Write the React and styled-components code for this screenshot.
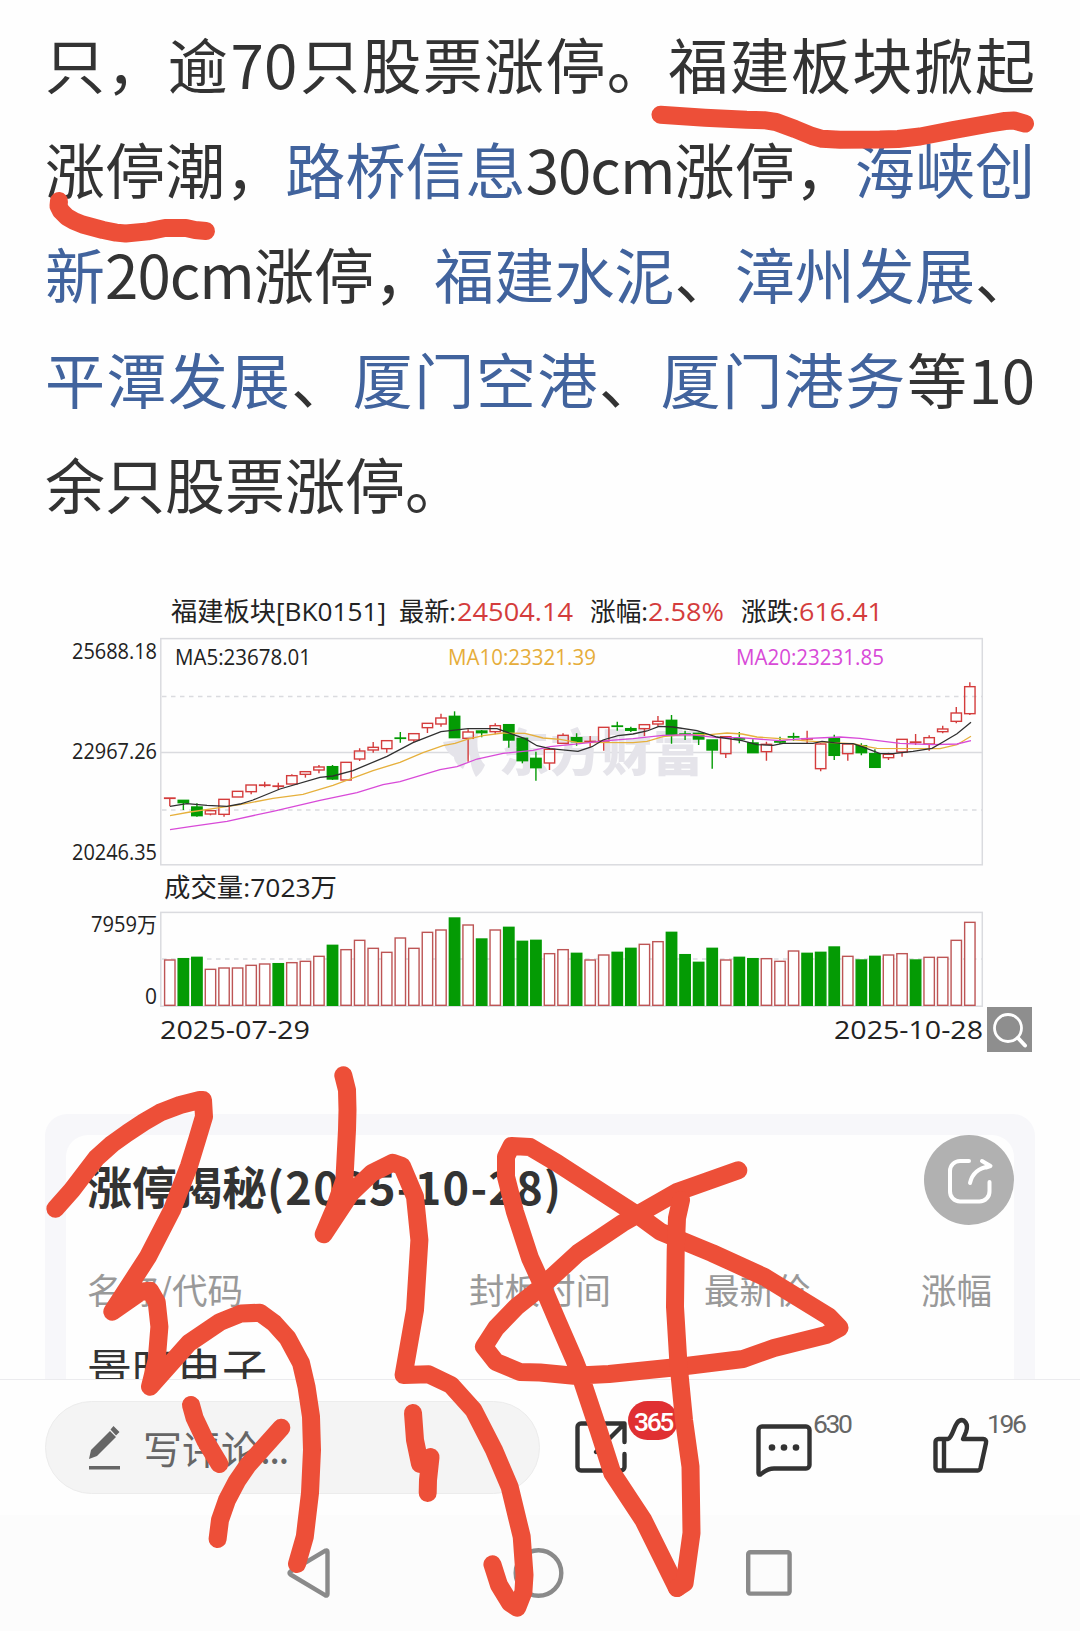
import React from 'react'
import styled, { createGlobalStyle, ThemeProvider } from 'styled-components'

const theme = {
    ink: '#333333',
    link: '#41639d',
    muted: '#999999',
    up: '#d43c3c',
    down: '#049b04',
    marker: '#ed4f38',
    cjk: '"Noto Sans CJK SC", sans-serif',
    chart: '"Open Sans", "Noto Sans CJK SC", sans-serif',
}

const GlobalStyle = createGlobalStyle`
    * {
        box-sizing: border-box;
    }

    body {
        margin: 0;
        background: #fefefe;
    }
`

const Screen = styled.div(
    ({ theme }) => `
    position: relative;
    display: flex;
    flex-direction: column;
    width: 1080px;
    height: 1631px;
    overflow: hidden;
    color: ${theme.ink};
    font-family: ${theme.cjk};
`
)

const Article = styled.main`
    display: flex;
    flex-direction: column;
    height: 1379px;
    padding: 10px 45px 0;
    overflow: hidden;
`

const Paragraph = styled.div`
    flex: none;
    font-size: 60px;
    line-height: 105px;
`

const Line = styled.div(
    ({ last }) => `
    white-space: nowrap;
    text-align: justify;
    text-align-last: ${last ? 'left' : 'justify'};
`
)

const Stock = styled.a(
    ({ theme }) => `
    color: ${theme.link};
`
)

const Amount = styled.span(
    ({ side = 0, tracking = 0 }) => `
    margin: 0 ${side}px;
    letter-spacing: ${tracking}px;
`
)

const Figure = styled.figure`
    display: flex;
    align-items: flex-end;
    flex: none;
    height: 463px;
    margin: 55px 0 0;
`

const Chart = styled.svg(
    ({ theme }) => `
    flex: none;
    width: 942px;
    height: 463px;
    font-family: ${theme.chart};
`
)

const ZoomButton = styled.button`
    display: flex;
    flex: none;
    width: 45px;
    height: 45px;
    margin-bottom: 1px;
    padding: 0;
    border: none;
    background: #8e8e8e;
`

const Panel = styled.section`
    flex: none;
    height: 400px;
    margin-top: 61px;
    padding: 21px;
    border-radius: 22px;
    background: #f7f7fa;
`

const PanelBody = styled.div`
    height: 379px;
    padding: 18px 21px 0;
    border-radius: 22px;
    background: #fefefe;
`

const PanelTitle = styled.h2`
    margin: 0;
    font-size: 45px;
    line-height: 66px;
    font-weight: 700;
    white-space: nowrap;
`

const TableHead = styled.div(
    ({ theme }) => `
    display: grid;
    grid-template-columns: 382px 235px 217px auto;
    margin-top: 44px;
    color: ${theme.muted};
    font-size: 35.5px;
    line-height: 52px;
    white-space: nowrap;
`
)

const StockName = styled.div`
    margin-top: 20px;
    font-size: 45px;
    line-height: 66px;
`

const FloatingShare = styled.button`
    position: absolute;
    top: 1135px;
    left: 924px;
    width: 90px;
    height: 90px;
    padding: 0;
    border: none;
    border-radius: 50%;
    background: #b1b1b1;
`

const ActionBar = styled.div`
    display: flex;
    align-items: flex-start;
    height: 136px;
    padding: 21px 45px 0;
    border-top: 1px solid #ebebee;
    background: #fefefe;
`

const CommentBox = styled.div`
    display: flex;
    align-items: center;
    width: 495px;
    height: 93px;
    padding: 0 0 2px 42px;
    border: 1px solid #ececec;
    border-radius: 47px;
    background: #f4f4f4;
    color: #666666;
    font-size: 39px;
    gap: 22px;
`

const Action = styled.div(
    ({ gap }) => `
    display: flex;
    align-items: flex-start;
    margin-left: ${gap}px;
`
)

const Icon = styled.svg(
    ({ width, height, top = 0, color = '#333333', line = 4.4 }) => `
    flex: none;
    width: ${width}px;
    height: ${height}px;
    margin-top: ${top}px;
    fill: none;
    stroke: ${color};
    stroke-width: ${line};
    stroke-linecap: round;
    stroke-linejoin: round;
    overflow: visible;
`
)

const Count = styled.span(
    ({ offset = 1 }) => `
    width: 40px;
    margin: 9px 0 0 ${offset}px;
    color: #666666;
    font-family: Roboto, sans-serif;
    font-size: 26.5px;
    line-height: 27px;
    letter-spacing: -2.4px;
`
)

const Badge = styled.span`
    width: 50px;
    height: 39px;
    margin-left: 1px;
    padding-left: 6px;
    border-radius: 20px;
    background: #e03032;
    color: #ffffff;
    font-family: Roboto, sans-serif;
    font-size: 26.5px;
    font-weight: 500;
    line-height: 41px;
    letter-spacing: -2.4px;
`

const SystemNav = styled.nav`
    display: flex;
    justify-content: space-between;
    align-items: center;
    height: 116px;
    padding: 0 288px 0 287px;
    background: #fcfcfc;
`

const Markup = styled.svg(
    ({ theme }) => `
    position: absolute;
    top: 0;
    left: 0;
    width: 1080px;
    height: 1631px;
    fill: none;
    stroke: ${theme.marker};
    stroke-width: 18;
    stroke-linecap: round;
    stroke-linejoin: round;
    pointer-events: none;
`
)

// direction, high, body top, body bottom, low (thirds of a pixel), volume top
const days = [
    ['r', 654, 654, 655, 679, 300], ['g', 661, 661, 668, 690, 296], ['g', 670, 681, 707, 710, 292],
    ['r', 692, 692, 702, 706, 328], ['r', 658, 658, 703, 710, 324], ['r', 634, 634, 651, 651, 324],
    ['r', 615, 615, 635, 643, 316], ['r', 605, 615, 616, 622, 312], ['r', 608, 618, 619, 629, 311, 'g'],
    ['r', 583, 587, 612, 612, 308], ['r', 575, 575, 583, 593, 304], ['r', 555, 561, 570, 580, 289],
    ['g', 555, 560, 597, 600, 256], ['r', 547, 547, 600, 600, 269], ['r', 505, 513, 537, 543, 241],
    ['r', 486, 502, 510, 518, 265], ['r', 482, 482, 506, 518, 277], ['g', 456, 474, 475, 488, 234, 'r'],
    ['r', 461, 461, 480, 486, 265], ['r', 430, 430, 443, 459, 217], ['r', 401, 414, 432, 440, 210],
    ['g', 394, 409, 473, 473, 174], ['r', 448, 456, 475, 545, 195], ['g', 450, 453, 458, 472, 237],
    ['r', 430, 437, 455, 463, 210], ['g', 434, 434, 480, 503, 202], ['g', 475, 475, 542, 550, 244],
    ['g', 515, 535, 563, 602, 241], ['r', 508, 508, 549, 570, 281], ['r', 460, 466, 490, 490, 269],
    ['g', 460, 473, 485, 497, 280], ['r', 468, 484, 487, 500, 300], ['r', 442, 442, 483, 512, 285],
    ['g', 425, 438, 442, 452, 277], ['g', 440, 446, 451, 456, 265], ['r', 434, 434, 446, 468, 253],
    ['r', 408, 424, 432, 440, 245], ['g', 405, 421, 465, 491, 217], ['g', 452, 462, 464, 480, 284],
    ['g', 458, 460, 477, 495, 307], ['g', 480, 480, 510, 566, 265], ['r', 470, 470, 521, 534, 300],
    ['g', 456, 476, 477, 490, 292], ['g', 478, 489, 518, 518, 296], ['r', 485, 493, 515, 542, 296],
    ['g', 470, 485, 486, 492, 304, 'r'], ['g', 458, 470, 471, 482, 273, 'r'], ['r', 452, 476, 477, 490, 280, 'g'],
    ['r', 490, 492, 566, 574, 277, 'g'], ['g', 464, 476, 526, 540, 261], ['r', 490, 492, 521, 542, 289],
    ['g', 490, 497, 518, 526, 300], ['g', 508, 521, 562, 562, 289], ['r', 518, 523, 533, 540, 285],
    ['r', 478, 478, 516, 530, 281], ['r', 462, 486, 487, 495, 300, 'g'], ['r', 466, 473, 492, 512, 292],
    ['r', 437, 447, 455, 460, 292], ['r', 381, 399, 424, 430, 241], ['r', 307, 320, 401, 405, 187],
]

const averages = [
    {
        color: '#e6b03c',
        points:
            '170,815.7 190,812 213,808.7 240,804.7 273,798.3 303,794.3 333,785.3 373,770.7 400,762.3 423,752.7 443,745.7 455,743.3 467,739.3 483,735.7 503,733 525,733.3 543,738 560,739.3 577,742.3 633,742.7 647,741.3 663,736.7 683,734.7 710,734.7 727,733 742,734 757,737 780,738.7 803,740.7 827,742.3 853,743.7 867,746.7 877,748.3 940,748.7 957,744.7 971,736.3',
    },
    {
        color: '#d84ad8',
        points:
            '170,829.7 190,826.7 227,821.3 273,811.3 320,800.3 357,792.7 383,784.7 400,781.7 440,769.7 457,766.7 477,759 503,753.3 533,750.3 550,746.7 580,743.7 607,740.7 633,738.7 663,735.3 690,734.7 717,737.7 740,737.7 780,740.7 803,738.7 840,737 860,738.3 900,743.3 933,744.7 957,744 971,740.7',
    },
    {
        color: '#303030',
        points:
            '170,806.3 187,803.7 207,805.3 227,806.3 240,804 253,800 280,789 320,777.3 333,776 353,770.7 387,756.3 413,742.7 441,731.7 468,728.7 497,728.7 510,733.3 525,738.7 537,745.7 550,748.7 578,751.3 592,746.7 603,740 618,735.7 633,734 647,731 659,726.3 673,727 697,730.7 717,737 742,740.7 757,744.7 773,745.3 783,743.3 813,743.3 822,741.3 840,743.3 853,743.7 862,746.7 880,753.7 893,753.7 913,751.3 932,748.3 943,742 957,733.7 971,722.3',
    },
]

const labels = [
    { x: 171, y: 621, w: 215, size: 26, text: '福建板块[BK0151]' },
    { x: 399, y: 621, w: 57, size: 26, text: '最新:' },
    { x: 457, y: 621, w: 116, size: 26, text: '24504.14', color: '#d43c3c' },
    { x: 590, y: 621, w: 58, size: 26, text: '涨幅:' },
    { x: 648, y: 621, w: 76, size: 26, text: '2.58%', color: '#d43c3c' },
    { x: 741, y: 621, w: 58, size: 26, text: '涨跌:' },
    { x: 799, y: 621, w: 84, size: 26, text: '616.41', color: '#d43c3c' },
    { x: 72, y: 658.5, w: 85, size: 21, text: '25688.18' },
    { x: 72, y: 759, w: 85, size: 21, text: '22967.26' },
    { x: 72, y: 859.5, w: 85, size: 21, text: '20246.35' },
    { x: 175, y: 665, w: 136, size: 21, text: 'MA5:23678.01' },
    { x: 448, y: 665, w: 148, size: 21, text: 'MA10:23321.39', color: '#e6ad3a' },
    { x: 736, y: 665, w: 148, size: 21, text: 'MA20:23231.85', color: '#d84ad8' },
    { x: 164, y: 897, w: 173, size: 26, text: '成交量:7023万' },
    { x: 91, y: 931.5, w: 66, size: 21, text: '7959万' },
    { x: 145, y: 1003.5, w: 12, size: 21, text: '0' },
    { x: 160, y: 1038.5, w: 150, size: 26, text: '2025-07-29' },
    { x: 834, y: 1038.5, w: 149, size: 26, text: '2025-10-28' },
]

const strokes = [
    '660.5,114.7 705,117.8 746.6,119.8 764,120.2 776,122 795,129 812,136 822,138.8 840,139.8 880,139.6 898,139 920,136.5 953,130.2 990,123.5 1005,121 1014,120.5 1025,123.6',
    '59,201 58.5,206 61,211 67,217 74,221 82.6,224.5 103,230 116,232.6 125.7,233.5 148,231.4 165,228 186,228 195,230 206,231',
    '55.4,1208.7 72,1190 96.4,1158 112,1144 127.4,1133 144,1122 160,1112.7 180,1105 199.7,1100 203,1100 204,1116.7 197,1140 189,1166 172,1210 148,1256.7 112.3,1311.7 141,1291.7 150,1290.7 156.7,1302 159.4,1326.7 156.7,1360 150,1386.7 189,1343 220,1322 241,1313.5 260,1312.7 274,1323 287.5,1338 301,1363 306.5,1386.7 311,1416.7 312,1450 310,1493 304.8,1536.7 297,1564',
    '191,1405 194.6,1418 205,1440 219.4,1464',
    '281.3,1427.7 248,1465 237,1481 227,1500 220,1520 217.6,1539',
    '343.3,1075.3 347,1090 347.5,1110 347,1130 344.4,1180 334,1210 323.7,1234.3 351,1193 372,1173 392.6,1162.7 402,1166 415,1196.7 419.4,1240 415,1310 403.6,1375 428.7,1374.3 451,1385 473.5,1410 494,1450 509.6,1486.7 521.7,1536.7 524.5,1575 523.4,1592 517.2,1607.7 510,1603 499,1585 492.4,1564.3',
    '413,1413 415,1440 420,1464 430.5,1457 428,1480 427.7,1493',
    '677,1588 643.3,1520 612.3,1473 598.5,1430 579.6,1373.3 574.4,1360 557,1320 540,1280 530,1258 515,1212 506,1176.7 506,1156.7 511.4,1146 530,1147 557,1163 609,1196.7 640,1216.7 660.5,1231.7 712,1253 764,1276.7 829,1316.7 839.6,1327.7 826,1335 774,1348 743,1359 678,1367 609,1374 574,1375.7 540,1372.5 520,1372 496,1362 484,1346.7 496,1328 516.5,1306.7 540,1288 578,1253 622.6,1223 677.7,1191.7 738.3,1170.3',
    '681,1200 677,1218 675.7,1250 675,1306.7 678.4,1363 684,1420 690.5,1466.7 691.5,1533 684.6,1583 677,1588',
]

const price = (v) => 580 + v / 3
const volume = (v) => 860 + v / 3

const Candle = ({ day, index }) => {
    const [kind, high, top, bottom, low, vol, volKind = kind] = day
    const x = 169.8 + index * 13.56
    const color = kind === 'g' ? theme.down : theme.up
    const flat = bottom - top < 5
    const volUp = volKind === 'r'
    return (
        <g strokeWidth="1.4">
            <path
                d={`M${x} ${price(high)}V${price(top)}M${x} ${price(bottom)}V${price(low)}`}
                stroke={color}
            />
            <rect
                x={x - 5.2}
                y={price(top)}
                width="10.4"
                height={flat ? 0.4 : price(bottom) - price(top)}
                fill={kind === 'g' ? color : 'none'}
                stroke={color}
            />
            <rect
                x={x - 5.2}
                y={volume(vol)}
                width="10.4"
                height={1005.3 - volume(vol)}
                fill={volUp ? '#ffffff' : theme.down}
                stroke={volUp ? '#bd5555' : theme.down}
            />
        </g>
    )
}

const StockChart = () => (
    <Chart viewBox="45 590 942 463">
        <g fill="none" stroke="#dadbdf" strokeWidth="1.5">
            <rect x="160.8" y="638.6" width="821.5" height="226.2" />
            <rect x="160.8" y="912.4" width="821.5" height="93.8" />
            <path d="M161 752.4H982" />
            <path d="M162 696.4H982M162 810H982M162 959H982" strokeDasharray="4.5 4.5" />
        </g>
        <g fill="#e5e4ea">
            <path d="M443 742c14-2 26-4 36-11-4 15 0 28 6 34-2 5-5 9-9 12-4-7-6-14-6-23l-7 15c-6-4-9-8-9-12-5-3-9-8-11-15z" />
            <text x="499" y="771" fontSize="50" fontWeight="900" textLength="204">
                东方财富
            </text>
        </g>
        {days.map((day, i) => (
            <Candle key={i} day={day} index={i} />
        ))}
        {averages.map(({ color, points }) => (
            <polyline key={color} points={points} fill="none" stroke={color} strokeWidth="1.3" />
        ))}
        {labels.map(({ x, y, w, size, text, color = '#222222' }) => (
            <text
                key={text}
                x={x}
                y={y}
                fontSize={size}
                fill={color}
                textLength={w}
                lengthAdjust="spacingAndGlyphs"
            >
                {text}
            </text>
        ))}
    </Chart>
)

const App = () => {
    return (
        <ThemeProvider theme={theme}>
            <GlobalStyle />
            <Screen>
                <Article>
                    <Paragraph>
                        <Line>
                            只，逾<Amount side={1.5}>70</Amount>只股票涨停。福建板块掀起
                        </Line>
                        <Line>
                            涨停潮，<Stock>路桥信息</Stock>
                            <Amount tracking={-1}>30cm</Amount>涨停，<Stock>海峡创</Stock>
                        </Line>
                        <Line>
                            <Stock>新</Stock>
                            <Amount tracking={-1}>20cm</Amount>涨停，<Stock>福建水泥</Stock>、
                            <Stock>漳州发展</Stock>、
                        </Line>
                        <Line>
                            <Stock>平潭发展</Stock>、<Stock>厦门空港</Stock>、
                            <Stock>厦门港务</Stock>等10
                        </Line>
                        <Line last>余只股票涨停。</Line>
                    </Paragraph>
                    <Figure>
                        <StockChart />
                        <ZoomButton>
                            <Icon width={45} height={46} color="#ffffff" line={2.8}>
                                <circle cx="21" cy="21" r="13.5" />
                                <path d="M31 31l7 7.5" strokeWidth="4" />
                            </Icon>
                        </ZoomButton>
                    </Figure>
                    <Panel>
                        <PanelBody>
                            <PanelTitle>
                                涨停揭秘<Amount tracking={1.3}>(2025-10-28)</Amount>
                            </PanelTitle>
                            <TableHead>
                                <span>名称/代码</span>
                                <span>封板时间</span>
                                <span>最新价</span>
                                <span>涨幅</span>
                            </TableHead>
                            <StockName>景旺电子</StockName>
                        </PanelBody>
                    </Panel>
                </Article>
                <ActionBar>
                    <CommentBox>
                        <Icon width={33} height={44} color="#666666" line={0}>
                            <path
                                d="M1 34l2-9L22 6l6 6L9 31zM22.500 4.500L25.500 1l6 6-3.500 3.500zM1 41h31v3.500H1z"
                                fill="#666666"
                            />
                        </Icon>
                        <span>
                            写评论<Amount tracking={-1.6}>...</Amount>
                        </span>
                    </CommentBox>
                    <Action gap={35}>
                        <Icon width={52} height={52} top={20}>
                            <path d="M49.500 21V2.500H6a3.500 3.500 0 0 0-3.500 3.500V46a3.500 3.500 0 0 0 3.500 3.500H46a3.500 3.500 0 0 0 3.500-3.500V33M49 3L21 31" />
                        </Icon>
                        <Badge>365</Badge>
                    </Action>
                    <Action gap={78}>
                        <Icon width={56} height={55} top={23}>
                            <path d="M6 2.500H50a3.500 3.500 0 0 1 3.500 3.500V41a3.500 3.500 0 0 1-3.500 3.500H18C11 44.500 8 48 4.500 50.500Q2.500 51 2.500 49V6A3.500 3.500 0 0 1 6 2.500z" />
                            <g fill="#333333" stroke="none">
                                <circle cx="16" cy="23.500" r="3.300" />
                                <circle cx="28" cy="23.500" r="3.300" />
                                <circle cx="40" cy="23.500" r="3.300" />
                            </g>
                        </Icon>
                        <Count>630</Count>
                    </Action>
                    <Action gap={80}>
                        <Icon width={55} height={56} top={17}>
                            <path d="M5.500 21H15C20 19 21 6 26 3C31 0 36 6 33 14L30 21H50a3 3 0 0 1 3 4L47.500 50a3.500 3.500 0 0 1-3 2.500H5.500A3 3 0 0 1 2.500 49.500V24A3 3 0 0 1 5.500 21zM11 22V52" />
                        </Icon>
                        <Count offset={-1}>196</Count>
                    </Action>
                </ActionBar>
                <SystemNav>
                    <Icon width={43} height={50} color="#8a8a8a">
                        <path d="M40.500 4V46Q40.500 48.500 38 47.200L3.500 26.500Q1.500 25 3.500 23.500L38 2.800Q40.500 1.500 40.500 4z" />
                    </Icon>
                    <Icon width={50} height={50} color="#8a8a8a">
                        <circle cx="25.5" cy="25" r="22.800" />
                    </Icon>
                    <Icon width={46} height={46} color="#8a8a8a">
                        <rect x="2.200" y="2.200" width="41.400" height="41.400" rx="2" />
                    </Icon>
                </SystemNav>
                <FloatingShare>
                    <Icon width={90} height={90} color="#ffffff" line={4}>
                        <path d="M45 26H36A10 10 0 0 0 26 36V56A10 10 0 0 0 36 66.500H55.500A10 10 0 0 0 65.500 56V47M46 48C48 39 55 33 65 31.500M58 26L66.500 31L62 32.500" />
                    </Icon>
                </FloatingShare>
                <Markup viewBox="0 0 1080 1631">
                    {strokes.map((points) => (
                        <polyline key={points} points={points} />
                    ))}
                </Markup>
            </Screen>
        </ThemeProvider>
    )
}

export default App
